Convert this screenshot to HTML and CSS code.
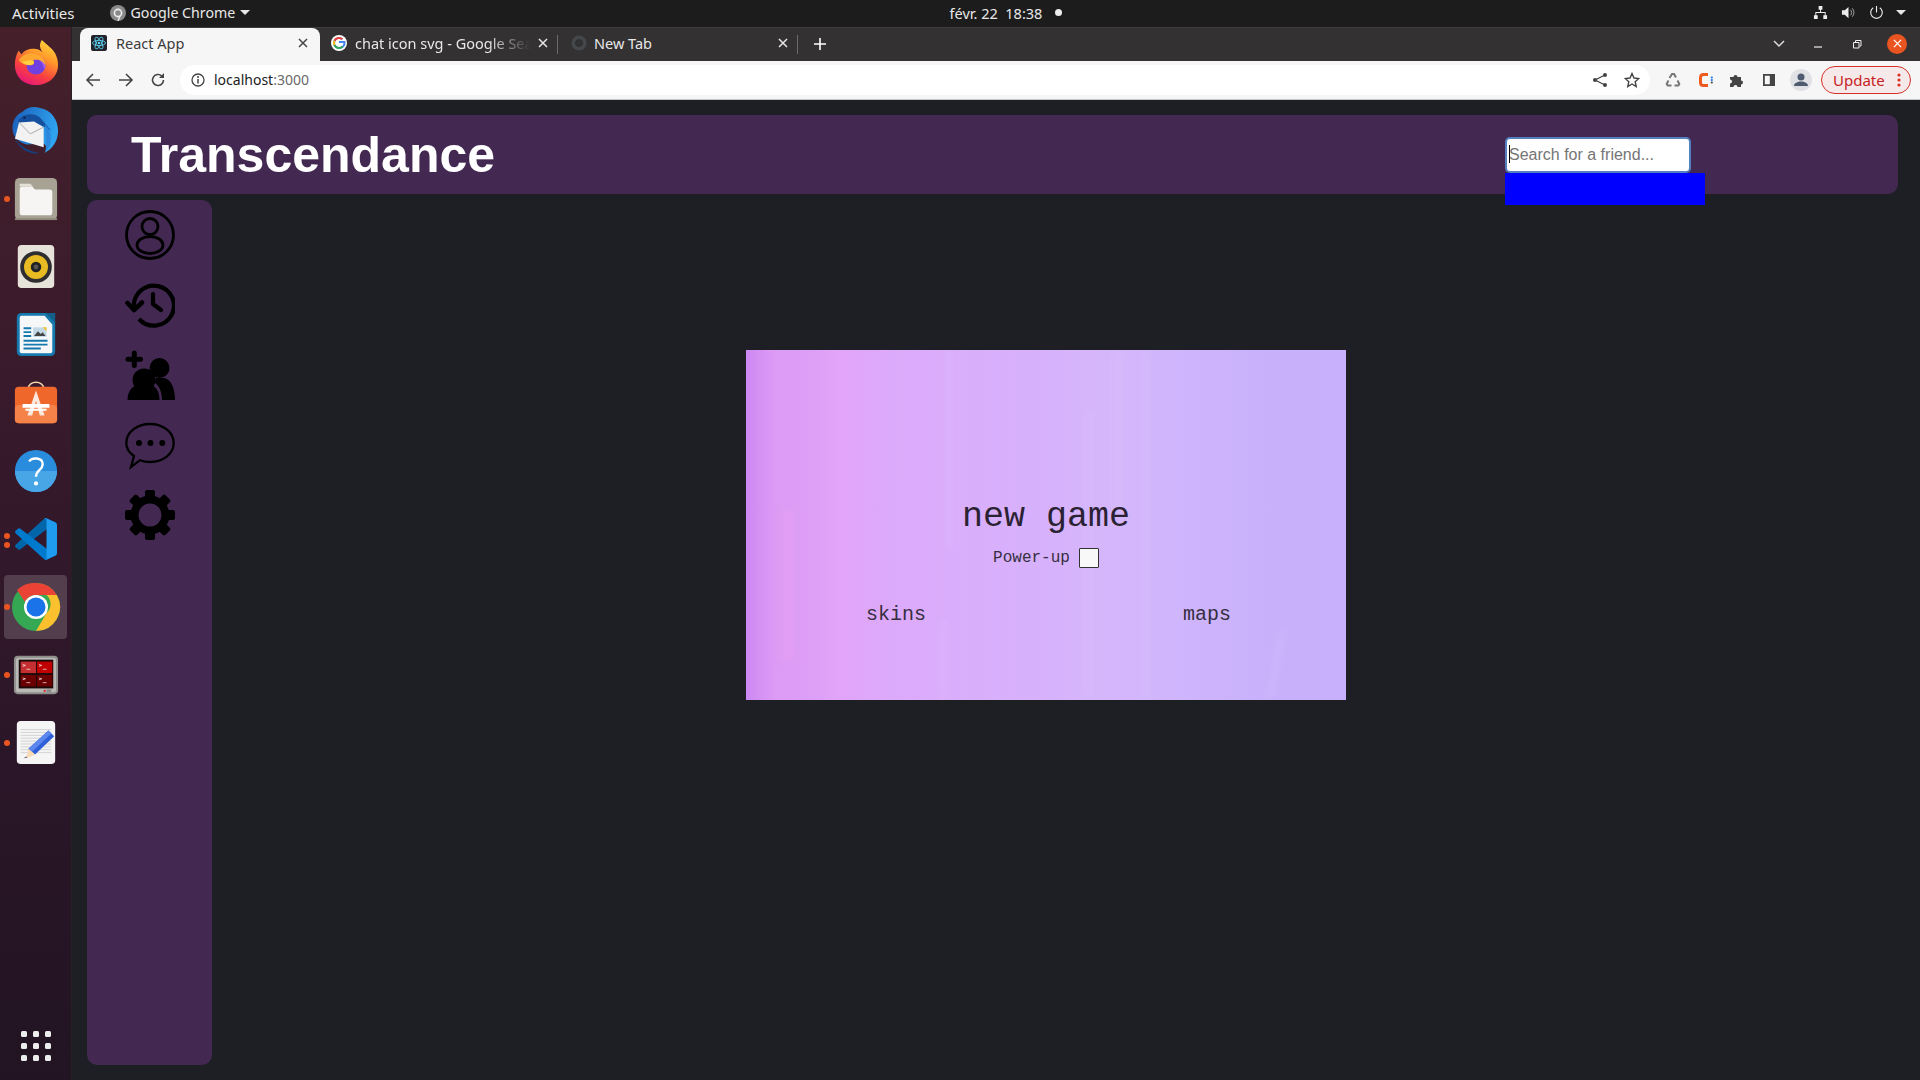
FILE: index.html
```html
<!DOCTYPE html>
<html lang="fr">
<head>
<meta charset="utf-8">
<title>React App</title>
<link rel="stylesheet" href="styles.css">
</head>
<body>
<div class="topbar">
  <div class="top-left">
    <span class="top-item">Activities</span>
    <span class="top-app">
      <svg class="app-icon" viewBox="0 0 16 16"><circle cx="8" cy="8" r="8" fill="#8a8a8a"/><circle cx="8" cy="8" r="3.6" fill="none" stroke="#eee" stroke-width="1.6"/><path d="M10 11l-2 5" stroke="#eee" stroke-width="1.4"/></svg>
      <span>Google Chrome</span>
      <i class="caret"></i>
    </span>
  </div>
  <div class="top-center"><span>févr. 22&nbsp; 18:38</span><i class="rec-dot"></i></div>
  <div class="top-right">
    <svg class="tray" viewBox="0 0 16 16"><path d="M6 1h4v4H6zM1 11h4v4H1zM11 11h4v4h-4zM7.5 5h1v2.5H13.5V11h-1V8.5H3.500V11h-1V7.5H7.5z" fill="#eee"/></svg>
    <svg class="tray" viewBox="0 0 16 16"><path d="M1 5.500h3L8 2v12L4 10.500H1z" fill="#eee"/><path d="M10 5a4 4 0 0 1 0 6M12 3.500a6.500 6.500 0 0 1 0 9" fill="none" stroke="#aaa" stroke-width="1"/></svg>
    <svg class="tray" viewBox="0 0 16 16"><path d="M4.500 3a6.200 6.200 0 1 0 7 0" fill="none" stroke="#eee" stroke-width="1.2"/><path d="M8 1v7" stroke="#eee" stroke-width="1.2"/></svg>
    <i class="caret tray-caret"></i>
  </div>
</div>

<div class="desktop">
  <nav class="dock">
    <div class="dock-item">
      <svg class="dock-icon" viewBox="0 0 46 48"><defs><linearGradient id="ff" x1="0.8" y1="0" x2="0.3" y2="1"><stop offset="0" stop-color="#ffdc3e"/><stop offset=".35" stop-color="#ff9a2b"/><stop offset=".7" stop-color="#f8413f"/><stop offset="1" stop-color="#e8177a"/></linearGradient></defs><path d="M29 0C36 6 38 8 40 10C43 13 46 19 46 26C46 38 36 47 23 47C10 47 1 38 1 26C1 20 3 14 5 11C6 13 7 14 8 15C10 11 15 9 21 9C24 9 27 10 30 13C27 9 26 5 29 0Z" fill="url(#ff)"/><circle cx="23" cy="26" r="10" fill="#7140e0"/><path d="M23 16a10 10 0 0 1 10 10c0 2-.5 3.500-1.500 5-1-7-5-12-12-14z" fill="#a35cf0"/><path d="M5 21C9 14 20 11 28 17C31 19 33 23 33 27C30 21 25 20 20 21C22 23 21 25 19 26C14 27 8 25 5 21Z" fill="#ffa72e"/><path d="M8 23c4 3 9 4 12 2 1-1 1-3-1-4-3 0-8 1-11 2z" fill="#ffd03f"/></svg>
    </div>
    <div class="dock-item">
      <svg class="dock-icon" viewBox="0 0 48 48"><defs><linearGradient id="tb" x1="0" y1="0" x2="1" y2="0.3"><stop offset="0" stop-color="#1a5cb8"/><stop offset="1" stop-color="#2fa3ef"/></linearGradient></defs><path d="M10 4C14-1 22-2 28 0C40 2 47 12 47 24C47 34 42 42 33 47C36 42 35 39 32 37L14 38C6 36 0 30-.5 22C-1 14 3 7 10 4Z" fill="url(#tb)"/><path d="M5 14C10 5 24 4 30 12L40 24C30 17 20 14 7 16Z" fill="#15509f"/><circle cx="12" cy="10" r="1.500" fill="#0c2c5c"/><path d="M6.300 15L22 14l10 6v21L2 32z" fill="#f2f2f2"/><path d="M6.300 15L18 27l14-7" fill="none" stroke="#a8a8a8" stroke-width="1"/><path d="M33 17c6 5 8 14 5 23l-4 5c1-9 1-19-1-28z" fill="#2a87dc"/><path d="M1 30c4 8 13 15 27 17-11 2-22-4-27-17z" fill="#163f80"/></svg>
    </div>
    <div class="dock-item has-dot">
      <svg class="dock-icon" viewBox="0 0 48 48"><rect x="2" y="2" width="44" height="44" rx="5" fill="#a8a294"/><rect x="2" y="44" width="44" height="2" fill="#8f897c"/><path d="M7 14q0-3 3-3h10l3 3h15q3 0 3 3v21q0 3-3 3H10q-3 0-3-3z" fill="#f6f5f3"/><path d="M7 8h11l3 3H7z" fill="#e4e1d9"/></svg>
    </div>
    <div class="dock-item">
      <svg class="dock-icon" viewBox="0 0 48 48"><rect x="5" y="1" width="38" height="45" rx="4" fill="#e7e3da"/><circle cx="24" cy="24" r="16.500" fill="#2e2e30"/><circle cx="24" cy="24" r="12.500" fill="#e9bb22"/><circle cx="24" cy="24" r="5.500" fill="#222"/><circle cx="24" cy="24" r="2.500" fill="#555"/></svg>
    </div>
    <div class="dock-item">
      <svg class="dock-icon" viewBox="0 0 48 48"><path d="M9 1h26l9 9v31q0 5-5 5H9q-5 0-5-5V6q0-5 5-5z" fill="#1679ad"/><path d="M9 4h24l8 9v28q0 2-2 2H9q-2 0-2-2V6q0-2 2-2z" fill="#f5f7f8"/><path d="M34 1h10v10z" fill="#125f8a"/><path d="M11 16h8v2h-8zM11 20h8v2h-8zM11 24h8v2h-8zM11 29h25v2H11zM11 33h25v2H11zM11 37h18v2H11z" fill="#1679ad"/><rect x="21" y="16" width="14" height="10" fill="#c4d8e6"/><path d="M22 25l4-5 3 3 2-2 3 4z" fill="#444"/><path d="M31 16h4v4z" fill="#f4c430"/></svg>
    </div>
    <div class="dock-item">
      <svg class="dock-icon" viewBox="0 0 48 48"><path d="M16 9c0-9 16-9 16 0" fill="none" stroke="#f7d3ae" stroke-width="1.6"/><rect x="2" y="7" width="44" height="38" rx="4" fill="#f0672c"/><rect x="2" y="26" width="44" height="19" rx="4" fill="#f48249"/><path d="M24 11l-9 26h5l4-15 4 15h5z" fill="#fbe8dd"/><path d="M10 25h28v4H10zM13 30h22v2H13z" fill="#fff"/></svg>
    </div>
    <div class="dock-item">
      <svg class="dock-icon" viewBox="0 0 48 48"><circle cx="24" cy="24" r="22" fill="#2a8cdc"/><path d="M2 24a22 22 0 0 0 44 0z" fill="#49a6e6"/><path d="M17 14c2-4 14-5 14 3 0 6-7 6-7 13" fill="none" stroke="#fff" stroke-width="2.5"/><circle cx="24" cy="37" r="2.2" fill="#fff"/></svg>
    </div>
    <div class="dock-item has-dots">
      <svg class="dock-icon code-icon" viewBox="0 0 100 100"><path d="M96.500 10.800L75.900.9a6.200 6.200 0 0 0-7.100 1.200L1.400 63.500a4.200 4.200 0 0 0 0 6.200l5.500 5a4.200 4.200 0 0 0 5.300.2L93.400 13.300c2.700-2 6.600-.1 6.600 3.300v-.2a6.300 6.300 0 0 0-3.500-5.600z" fill="#0065a9"/><path d="M96.500 89.200l-20.600 9.900a6.200 6.200 0 0 1-7.100-1.200L1.400 36.500a4.200 4.200 0 0 1 0-6.200l5.500-5a4.200 4.200 0 0 1 5.300-.2l81.200 61.600c2.700 2 6.600.1 6.600-3.300v.2a6.300 6.300 0 0 1-3.500 5.600z" fill="#007acc"/><path d="M75.900 99.100a6.200 6.200 0 0 1-7.100-1.200c2.300 2.300 6.200.7 6.200-2.600V4.700c0-3.300-3.900-4.900-6.200-2.600a6.200 6.200 0 0 1 7.100-1.200l20.600 9.900A6.300 6.300 0 0 1 100 16.400v67.200a6.300 6.300 0 0 1-3.500 5.600z" fill="#1f9cf0"/></svg>
    </div>
    <div class="dock-item has-dot active">
      <svg class="dock-icon chrome-big" viewBox="0 0 48 48"><circle cx="24" cy="24" r="24" fill="#34a853"/><path d="M24 0a24 24 0 0 1 20.800 12H24a12 12 0 0 0-11 7L5 7A24 24 0 0 1 24 0z" fill="#ea4335"/><path d="M44.800 12A24 24 0 0 1 24 48l10.500-18a12 12 0 0 0 0-18z" fill="#fbc02d"/><circle cx="24" cy="24" r="12" fill="#fff"/><circle cx="24" cy="24" r="9.500" fill="#1a73e8"/></svg>
    </div>
    <div class="dock-item has-dot">
      <svg class="dock-icon" viewBox="0 0 48 48"><rect x="1" y="4" width="46" height="40" rx="4" fill="#8e8e8a"/><rect x="3" y="6" width="42" height="36" rx="3" fill="#b9b9b6"/><rect x="6" y="8" width="36" height="30" fill="#1b0a0a"/><rect x="8" y="10" width="16" height="12" fill="#c62f32"/><rect x="25" y="10" width="16" height="12" fill="#c00000"/><rect x="8" y="24" width="16" height="12" fill="#6a0000"/><rect x="25" y="24" width="16" height="12" fill="#6a0000"/><path d="M10 13l3 1-3 1M27 13l3 1-3 1M10 27l3 1-3 1M27 27l3 1-3 1M14 18h4M31 18h4M14 32h4M31 32h4" fill="none" stroke="#fff" stroke-width=".7"/><rect x="32" y="39.500" width="2" height="2" fill="#e02020"/><rect x="35" y="39" width="5" height="3" fill="#8a8a8a"/></svg>
    </div>
    <div class="dock-item has-dot">
      <svg class="dock-icon" viewBox="0 0 48 48"><rect x="4" y="1" width="40" height="45" rx="4" fill="#f5f5f5"/><path d="M8 10h32M8 13h32M8 16h32M8 19h32M8 22h32M8 25h32M8 28h32M8 31h32M8 34h32" stroke="#d2d2d2" stroke-width="1"/><path d="M37 11l6 6-20 19-7-6z" fill="#2f5fd8"/><path d="M37 11l3 3-20 19-4-3z" fill="#5d86ee"/><path d="M16 30l7 6-9 4z" fill="#f8d9b4"/><path d="M11 40l3-2 1 1z" fill="#444"/></svg>
    </div>
    <div class="dock-apps">
      <i></i><i></i><i></i><i></i><i></i><i></i><i></i><i></i><i></i>
    </div>
  </nav>

  <div class="window">
    <div class="tabstrip">
      <div class="tab tab-active">
        <svg class="favicon" viewBox="0 0 16 16"><rect width="16" height="16" rx="2" fill="#20232a"/><g fill="none" stroke="#61dafb" stroke-width=".8"><ellipse cx="8" cy="8" rx="6.500" ry="2.600"/><ellipse cx="8" cy="8" rx="6.500" ry="2.600" transform="rotate(60 8 8)"/><ellipse cx="8" cy="8" rx="6.500" ry="2.600" transform="rotate(120 8 8)"/></g><circle cx="8" cy="8" r="1.300" fill="#61dafb"/></svg>
        <span class="tab-title">React App</span>
        <svg class="tab-close" viewBox="0 0 10 10"><path d="M1 1l8 8M9 1l-8 8" stroke="#444" stroke-width="1.5"/></svg>
      </div>
      <div class="tab">
        <svg class="favicon" viewBox="0 0 16 16"><circle cx="8" cy="8" r="8" fill="#fff"/><path d="M8 7h5.500c.4 3.500-2 6-5.500 6a5 5 0 1 1 3.400-8.700" fill="none" stroke="#4285f4" stroke-width="2"/><path d="M11.400 4.300A5 5 0 0 0 3.500 5.800" fill="none" stroke="#ea4335" stroke-width="2"/><path d="M3.500 5.800a5 5 0 0 0 0 4.400" fill="none" stroke="#fbbc05" stroke-width="2"/><path d="M3.500 10.200A5 5 0 0 0 11.500 11.500" fill="none" stroke="#34a853" stroke-width="2"/></svg>
        <span class="tab-title fade">chat icon svg - Google Search</span>
        <svg class="tab-close" viewBox="0 0 10 10"><path d="M1 1l8 8M9 1l-8 8" stroke="#e8e8e8" stroke-width="1.5"/></svg>
        <i class="tab-sep"></i>
      </div>
      <div class="tab tab-blank">
        <svg class="favicon" viewBox="0 0 16 16"><circle cx="8" cy="8" r="7.500" fill="#45484b"/><circle cx="8" cy="8" r="3.500" fill="#333" stroke="#2d2f31" stroke-width="1"/></svg>
        <span class="tab-title">New Tab</span>
        <svg class="tab-close" viewBox="0 0 10 10"><path d="M1 1l8 8M9 1l-8 8" stroke="#e8e8e8" stroke-width="1.5"/></svg>
        <i class="tab-sep"></i>
      </div>
      <svg class="new-tab" viewBox="0 0 12 12"><path d="M6 0v12M0 6h12" stroke="#fff" stroke-width="1.6"/></svg>
      <div class="win-controls">
        <svg class="win-ctl" viewBox="0 0 12 12"><path d="M1 3l5 5 5-5" fill="none" stroke="#ddd" stroke-width="1.5"/></svg>
        <svg class="win-ctl" viewBox="0 0 12 12"><path d="M2 9h8" stroke="#eee" stroke-width="1.2"/></svg>
        <svg class="win-ctl" viewBox="0 0 12 12"><path d="M2.500 4.500h5.500v5.500H2.500zM4.500 4V2.500h5.500V8H8.500" fill="none" stroke="#eee" stroke-width="1"/></svg>
        <span class="win-close"><svg viewBox="0 0 10 10"><path d="M1 1l8 8M9 1l-8 8" stroke="#fff" stroke-width="1.4"/></svg></span>
      </div>
    </div>

    <div class="toolbar">
      <svg class="tool" viewBox="0 0 16 16"><path d="M15 8H2M8 2L2 8l6 6" fill="none" stroke="#444" stroke-width="1.6"/></svg>
      <svg class="tool tool-forward" viewBox="0 0 16 16"><path d="M1 8h13M8 2l6 6-6 6" fill="none" stroke="#444" stroke-width="1.6"/></svg>
      <svg class="tool" viewBox="0 0 16 16"><path d="M13.500 8A5.500 5.500 0 1 1 11.800 4" fill="none" stroke="#444" stroke-width="1.6"/><path d="M14 1v5H9z" fill="#444"/></svg>
      <div class="omnibox">
        <svg class="info" viewBox="0 0 14 14"><circle cx="7" cy="7" r="6" fill="none" stroke="#444" stroke-width="1.3"/><path d="M7 6v4.500" stroke="#444" stroke-width="1.5"/><circle cx="7" cy="4" r="1" fill="#444"/></svg>
        <span class="url">localhost<span class="url-port">:3000</span></span>
        <span class="omni-right">
          <svg class="tool-sm" viewBox="0 0 16 16"><circle cx="13" cy="3" r="2" fill="#444"/><circle cx="13" cy="13" r="2" fill="#444"/><circle cx="3" cy="8" r="2" fill="#444"/><path d="M13 3L3 8l10 5" fill="none" stroke="#444" stroke-width="1.3"/></svg>
          <svg class="tool-sm" viewBox="0 0 16 16"><path d="M8 1.500l2 4.500 4.800.5-3.600 3.200 1 4.800L8 12l-4.200 2.500 1-4.800L1.200 6.500 6 6z" fill="none" stroke="#444" stroke-width="1.4"/></svg>
        </span>
      </div>
      <svg class="tool" viewBox="0 0 16 16"><g fill="none" stroke="#777" stroke-width="2"><path d="M4.500 6L7 2h2l2 3.500"/><path d="M12.500 8.500l1.800 3.500-1 1.500H9.500"/><path d="M6.500 13.500H2.700l-1-1.500L3.500 8.500"/></g></svg>
      <svg class="tool" viewBox="0 0 16 16"><path d="M11 2.500H6.500q-3 0-3 3v5q0 3 3 3H11" fill="none" stroke="#f05a22" stroke-width="3"/><circle cx="14.800" cy="5.500" r="1.100" fill="#1a73e8"/><circle cx="14.800" cy="8" r="1.100" fill="#1a73e8"/><circle cx="14.800" cy="10.500" r="1.100" fill="#444"/></svg>
      <svg class="tool" viewBox="0 0 16 16"><path d="M1 5h3.500a2 2 0 1 1 4 0H12v3.500a2 2 0 1 1 0 4V15H8.500a2 2 0 1 0-4 0H1v-3.500a2 2 0 1 0 0-4z" fill="#444"/></svg>
      <svg class="tool" viewBox="0 0 16 16"><path d="M2 2h12v12H2zM3.800 3.800v8.400h5V3.800z" fill="#444" fill-rule="evenodd"/></svg>
      <span class="avatar"><svg viewBox="0 0 22 22"><circle cx="11" cy="8" r="3.500" fill="#4f5b6e"/><path d="M4 17c0-6 14-6 14 0z" fill="#4f5b6e"/></svg></span>
      <div class="update"><span>Update</span><svg class="update-dots" viewBox="0 0 4 16"><circle cx="2" cy="3" r="1.600" fill="#d93025"/><circle cx="2" cy="8" r="1.600" fill="#d93025"/><circle cx="2" cy="13" r="1.600" fill="#d93025"/></svg></div>
    </div>

    <main class="page">
      <header class="app-header">
        <h1 class="app-title">Transcendance</h1>
        <div class="search">
          <input class="search-input" type="text" placeholder="Search for a friend...">
          <div class="search-results"></div>
        </div>
      </header>
      <div class="app-body">
        <aside class="sidebar">
          <svg class="side-icon" viewBox="0 0 50 50" fill="none" stroke="#000" stroke-width="2.8"><circle cx="25" cy="25" r="23.500"/><circle cx="25" cy="16.500" r="8"/><ellipse cx="25" cy="35" rx="13" ry="8.500"/></svg>
          <svg class="side-icon" viewBox="0 0 50 50" fill="none" stroke="#000" stroke-width="4.2"><path d="M9 27.500A20 20 0 1 1 14 39"/><path d="M2.500 23l6.500 7 8-7.500" stroke-width="4.6" stroke-linecap="round" stroke-linejoin="round"/><path d="M28 14v10l8 6" stroke-linecap="round" stroke-linejoin="round"/></svg>
          <svg class="side-icon" viewBox="0 0 50 50"><path d="M9.300 3v12.500M3 9.300h12.500" stroke="#000" stroke-width="5" stroke-linecap="round"/><circle cx="19" cy="30" r="11.500"/><path d="M2.500 50c0-9 5-14 10-15h13c5 1 9 6 9 15z"/><circle cx="34.500" cy="18" r="10"/><path d="M37 50c0-7-2-14-8-18l2-4h8c7 1 11 10 11 22z"/></svg>
          <svg class="side-icon" viewBox="0 0 50 50"><path d="M9 36C3 32 1.300 27 1.300 23 1.300 12 12 4 25 4s23.700 8 23.700 19S38 42 25 42c-4 0-7-.6-10-1.800L6 47z" fill="none" stroke="#000" stroke-width="2.3"/><circle cx="14" cy="23" r="3"/><circle cx="25.500" cy="23" r="3"/><circle cx="37.300" cy="23" r="3"/></svg>
          <svg class="side-icon" viewBox="0 0 50 50"><circle cx="25" cy="25" r="15.500" fill="none" stroke="#000" stroke-width="8"/><g><rect x="20" y="0" width="10" height="9" rx="2"/><rect x="20" y="0" width="10" height="9" rx="2" transform="rotate(45 25 25)"/><rect x="20" y="0" width="10" height="9" rx="2" transform="rotate(90 25 25)"/><rect x="20" y="0" width="10" height="9" rx="2" transform="rotate(135 25 25)"/><rect x="20" y="0" width="10" height="9" rx="2" transform="rotate(180 25 25)"/><rect x="20" y="0" width="10" height="9" rx="2" transform="rotate(225 25 25)"/><rect x="20" y="0" width="10" height="9" rx="2" transform="rotate(270 25 25)"/><rect x="20" y="0" width="10" height="9" rx="2" transform="rotate(315 25 25)"/></g></svg>
        </aside>
        <section class="stage">
          <div class="game-card">
            <div class="new-game">new game</div>
            <label class="powerup"><span>Power-up</span><input class="powerup-box" type="checkbox"></label>
            <div class="choices"><span>skins</span><span>maps</span></div>
          </div>
        </section>
      </div>
    </main>
  </div>
</div>
</body>
</html>
```

FILE: styles.css
```css
* { box-sizing: border-box; }
html, body { height: 100%; }
body {
  margin: 0;
  height: 1080px;
  overflow: hidden;
  display: flex;
  flex-direction: column;
  background: #1e1f24;
  font-family: "Noto Sans", sans-serif;
}

/* GNOME top bar */
.topbar {
  height: 27px;
  flex: none;
  background: #1c1c1c;
  color: #e8e8e8;
  font-size: 14.5px;
  display: grid;
  grid-template-columns: 1fr auto 1fr;
  align-items: center;
  padding: 0 15px 2px 12px;
}
.top-left { display: flex; align-items: center; gap: 35px; }
.top-item { font-size: 15px; }
.top-app { display: flex; align-items: center; gap: 5px; font-size: 14.2px; }
.app-icon { width: 16px; height: 16px; }
.caret {
  width: 0; height: 0;
  border-left: 5px solid transparent;
  border-right: 5px solid transparent;
  border-top: 5px solid #e8e8e8;
}
.top-center { display: flex; align-items: center; gap: 13px; padding-left: 95px; }
.rec-dot { width: 7px; height: 7px; border-radius: 50%; background: #eee; }
.top-right { display: flex; align-items: center; justify-content: flex-end; gap: 13px; padding-left: 0; }
.tray { width: 15px; height: 15px; }
.tray-caret { margin-left: -1px; margin-right: -1px; }

.desktop { flex: 1; display: flex; min-height: 0; }

/* Dock */
.dock {
  width: 72px;
  flex: none;
  padding-top: 2px;
  display: flex;
  flex-direction: column;
  align-items: stretch;
  background: linear-gradient(180deg, #45202a 0%, #381a2c 35%, #2a1628 70%, #221423 100%);
  border-right: 1px solid #262026;
}
.dock-item {
  height: 68px;
  flex: none;
  display: flex;
  align-items: center;
  justify-content: center;
  position: relative;
}
.dock-icon { width: 46px; height: 46px; overflow: visible; }
.code-icon { width: 42px; height: 42px; margin-left: 1px; }
.chrome-big { width: 48px; height: 48px; }
.dock-item.active::before {
  content: "";
  position: absolute;
  left: 4px; right: 4px; top: 2px; bottom: 2px;
  border-radius: 4px;
  background: rgba(255, 255, 255, .17);
}
.dock-item.active .dock-icon { position: relative; }
.has-dot::after, .has-dots::after {
  content: "";
  position: absolute;
  left: 4px;
  top: 31px;
  width: 6px; height: 6px;
  border-radius: 50%;
  background: #e95420;
}
.has-dots::after { top: 28px; box-shadow: 0 9px 0 #e95420; }
.dock-apps {
  margin-top: auto;
  margin-bottom: 19px;
  align-self: center;
  display: grid;
  grid-template-columns: repeat(3, 6px);
  grid-auto-rows: 6px;
  gap: 6px;
}
.dock-apps i { background: #eee; border-radius: 1.5px; }

/* Chrome window */
.window { flex: 1; min-width: 0; display: flex; flex-direction: column; }
.tabstrip {
  height: 34px;
  flex: none;
  background: #333132;
  border-top: 1px solid #3d3d3d;
  padding-left: 8px;
  display: flex;
  align-items: stretch;
  color: #e8e8e8;
  font-size: 14.5px;
}
.tab {
  width: 240px;
  display: flex;
  align-items: center;
  padding: 0 10px 3px 11px;
  position: relative;
}
.tab-active {
  background: #f6f6f6;
  color: #3c3c3c;
  border-radius: 8px 8px 0 0;
}
.favicon { width: 16px; height: 16px; flex: none; margin-right: 8px; }
.tab-active .favicon { margin-right: 9px; }
.tab-blank .favicon { margin-right: 7px; }
.tab-title { flex: 1; white-space: nowrap; overflow: hidden; }
.fade {
  -webkit-mask-image: linear-gradient(90deg, #000 75%, transparent 100%);
  mask-image: linear-gradient(90deg, #000 75%, transparent 100%);
  flex: none;
  width: 176px;
  margin-right: auto;
}
.tab-close { width: 10px; height: 10px; flex: none; margin-right: 2px; }
.tab-sep {
  position: absolute;
  right: 2px; top: 7px; bottom: 7px;
  width: 1px;
  background: #6b6b6b;
}
.new-tab { width: 12px; height: 12px; align-self: center; margin-left: 14px; margin-bottom: 2px; }
.win-controls {
  margin-left: auto;
  padding: 0 13px 2px 0;
  display: flex;
  align-items: center;
  gap: 27px;
}
.win-ctl { width: 12px; height: 12px; }
.win-close {
  width: 20px; height: 20px;
  margin-left: -3px;
  border-radius: 50%;
  background: #e95420;
  display: flex;
  align-items: center;
  justify-content: center;
}
.win-close svg { width: 9px; height: 9px; }

.toolbar {
  height: 39px;
  flex: none;
  background: #f6f6f6;
  border-bottom: 1px solid #c6c6c6;
  display: flex;
  align-items: center;
  padding: 0 9px 1px 5px;
}
.tool { width: 16px; height: 16px; margin: 0 8px; flex: none; }
.tool-forward { margin-left: 9px; }
.omnibox {
  flex: none;
  width: 1470px;
  height: 30px;
  margin: 0 7px 0 6px;
  border-radius: 15px;
  background: #fff;
  display: flex;
  align-items: center;
  padding: 0 10px 0 11px;
  font-size: 14px;
  color: #222;
}
.info { width: 14px; height: 14px; margin-right: 9px; }
.url-port { color: #6a6a6a; }
.omni-right { margin-left: auto; display: flex; gap: 16px; align-items: center; }
.tool-sm { width: 16px; height: 16px; }
.avatar {
  width: 22px; height: 22px;
  margin: 0 9px 0 5px;
  border-radius: 50%;
  background: #dfe1e5;
  flex: none;
}
.avatar svg { display: block; width: 22px; height: 22px; }
.update {
  flex: 1;
  height: 28px;
  border: 1px solid #d93025;
  border-radius: 14px;
  background: #f6e9e9;
  color: #c5221f;
  font-size: 15px;
  display: flex;
  align-items: center;
  justify-content: space-between;
  padding: 0 9px 0 11px;
}
.update-dots { width: 4px; height: 16px; }

/* The app */
.page {
  flex: 1;
  min-height: 0;
  padding: 15px 22px 15px 15px;
  display: flex;
  flex-direction: column;
  gap: 6px;
  background: #1e1f24;
}
.app-header {
  height: 79px;
  flex: none;
  border-radius: 10px;
  background: #432952;
  display: flex;
  align-items: center;
  justify-content: space-between;
  padding: 0 207px 0 44px;
}
.app-title {
  margin: 0;
  color: #fff;
  font: 700 50px "Liberation Sans", Arial, sans-serif;
}
.search { position: relative; width: 186px; height: 36px; }
.search::before {
  content: "";
  position: absolute;
  left: 4px; top: 8px;
  width: 1px; height: 18px;
  background: #000;
  z-index: 1;
}
.search-input {
  display: block;
  width: 186px;
  height: 36px;
  padding: 0 2px;
  border: 2px solid #5580c0;
  border-radius: 5px;
  background: #fff;
  outline: none;
  font: 16px "Liberation Sans", Arial, sans-serif;
}
.search-input::placeholder { color: #757575; }
.search-results {
  position: absolute;
  left: 0; top: 100%;
  width: 200px;
  height: 32px;
  background: #00f;
}
.app-body { flex: 1; min-height: 0; display: flex; }
.sidebar {
  width: 125px;
  flex: none;
  border-radius: 10px;
  background: #432952;
  padding-top: 10px;
  display: flex;
  flex-direction: column;
  align-items: center;
  gap: 20px;
}
.side-icon { width: 50px; height: 50px; flex: none; }
.stage {
  flex: 1;
  display: flex;
  justify-content: center;
  padding: 150px 18px 0 0;
}
.game-card {
  width: 600px;
  height: 350px;
  padding-top: 147px;
  position: relative;
  overflow: hidden;
  display: flex;
  flex-direction: column;
  align-items: center;
  font-family: "Liberation Mono", "Courier New", monospace;
  color: #2a2233;
  background: linear-gradient(90deg, #cc88f4 0%, #d590f3 2%, #dd9bf5 5%, #dc9ef6 10%, #e2a4f8 15%, #dcaafa 25%, #d9aefb 36%, #d7b1fc 50%, #d6b6fb 58%, #cfb5fc 72%, #c8b0fb 88%, #c8b0fc 100%);
}
.game-card::before {
  content: "";
  position: absolute;
  inset: 0;
  filter: blur(3px);
  background:
    linear-gradient(90deg, transparent, rgba(255,255,255,.12), transparent) 199px 0 / 8px 200px no-repeat,
    linear-gradient(90deg, transparent, rgba(255,255,255,.05), transparent) 150px 0 / 12px 130px no-repeat,
    linear-gradient(90deg, transparent, rgba(255,255,255,.07), transparent) 362px 0 / 20px 160px no-repeat,
    linear-gradient(90deg, transparent, rgba(255,255,255,.07), transparent) 392px 0 / 16px 350px no-repeat,
    linear-gradient(90deg, transparent, rgba(255,255,255,.06), transparent) 335px 60px / 14px 290px no-repeat,
    linear-gradient(90deg, transparent, rgba(255,255,255,.08), transparent) 190px 270px / 14px 80px no-repeat,
    linear-gradient(100deg, transparent 40%, rgba(255,255,255,.1) 50%, transparent 60%) 505px 280px / 50px 70px no-repeat,
    linear-gradient(90deg, transparent, rgba(245,165,240,.3), transparent) 30px 160px / 22px 150px no-repeat;
}
.game-card > * { position: relative; }
.new-game { font-size: 35px; line-height: 40px; }
.powerup {
  margin-top: 11px;
  display: flex;
  align-items: center;
  gap: 9px;
  font-size: 16px;
  color: #362e3f;
}
.powerup-box {
  appearance: none;
  -webkit-appearance: none;
  width: 20px; height: 20px;
  margin: 0;
  background: #f8f8f8;
  border: 1px solid #333;
  border-radius: 1px;
}
.choices {
  width: 100%;
  margin-top: 35px;
  padding: 0 115px 0 120px;
  display: flex;
  justify-content: space-between;
  font-size: 20px;
  line-height: 24px;
  color: #362e3f;
}
```
